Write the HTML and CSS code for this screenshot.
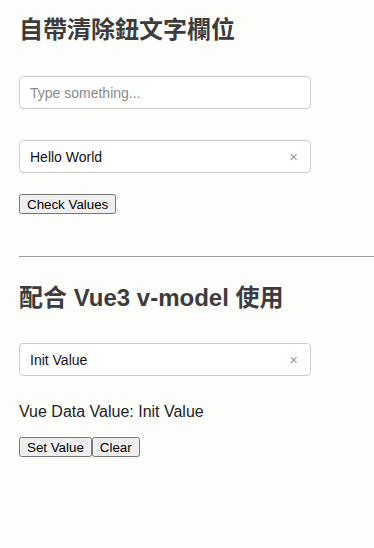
FILE: index.html
```html
<!DOCTYPE html>
<html lang="zh-Hant">
  <head>
    <meta charset="UTF-8" />
    <title>Clearable Input</title>
    <link rel="stylesheet" href="styles.css">
  </head>
  <body>
    <h2 class="title">自帶清除鈕文字欄位</h2>

    <div class="field first">
      <input type="text" placeholder="Type something..." />
    </div>

    <div class="field">
      <input type="text" value="Hello World" />
      <span class="clear">×</span>
    </div>

    <div class="actions">
      <button type="button">Check Values</button>
    </div>

    <hr class="divider" />

    <h2 class="title">配合 Vue3 v-model 使用</h2>

    <div class="field vue">
      <input type="text" value="Init Value" />
      <span class="clear">×</span>
    </div>

    <p class="data-value">Vue Data Value: Init Value</p>

    <div class="actions tight">
      <button type="button">Set Value</button><button type="button">Clear</button>
    </div>
  </body>
</html>
```

FILE: styles.css
```css
* {
  box-sizing: border-box;
}

body {
  margin: 0;
  padding: 18px 0 0 19px;
  background: #fdfdfb;
  font-family: "Liberation Sans", Arial, "Noto Sans CJK TC", sans-serif;
  color: #222;
}

.title {
  margin: 0;
  font-size: 24px;
  line-height: 24px;
  font-weight: bold;
  color: #3c3c3c;
}

.field {
  position: relative;
  width: 292px;
  margin-top: 31px;
}

.field.first {
  margin-top: 34px;
}

.field.vue {
  margin-top: 33px;
}

.field input {
  display: block;
  width: 100%;
  height: 33px;
  padding: 0 30px 0 10px;
  border: 1px solid #ccc;
  border-radius: 4px;
  background: #fff;
  font-family: inherit;
  font-size: 14px;
  color: #111;
}

.field input::placeholder {
  color: #888;
}

.clear {
  position: absolute;
  right: 13px;
  top: 9px;
  font-size: 15px;
  line-height: 15px;
  color: #999;
}

.actions {
  margin-top: 21px;
  display: flex;
}

.actions button {
  font-family: inherit;
  font-size: 13.33px;
  height: 20px;
  padding: 0 6px;
}

.actions.tight {
  margin-top: 16px;
}

.divider {
  margin: 42px 0 0;
  border: 0;
  border-top: 1px solid #999;
}

.divider + .title {
  margin-top: 29px;
}

.data-value {
  margin: 27px 0 0;
  font-size: 16px;
  line-height: 18px;
}
```
